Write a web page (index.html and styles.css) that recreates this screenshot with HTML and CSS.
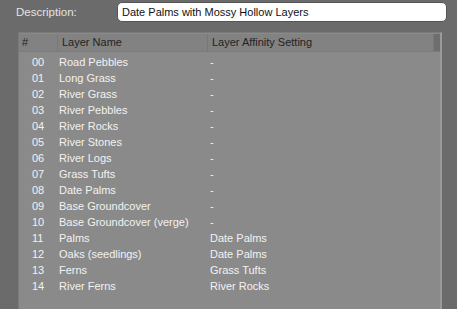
FILE: index.html
```html
<!DOCTYPE html>
<html lang="en">

<head>
    <meta charset="UTF-8">
    <title>Layer Set</title>
    <link rel="stylesheet" href="styles.css">
</head>

<body>
    <div class="desc-row">
        <label class="desc-label" for="desc">Description:</label>
        <div class="desc-box" id="desc">Date Palms with Mossy Hollow Layers</div>
    </div>

    <div class="panel">
        <div class="head">
            <div class="hcell hnum">#</div>
            <div class="hcell">Layer Name</div>
            <div class="hcell">Layer Affinity Setting</div>
            <div class="hscroll"></div>
        </div>
        <div class="rows" id="rows"></div>
    </div>

    <script>
        const layers = [
            ['00', 'Road Pebbles', '-'],
            ['01', 'Long Grass', '-'],
            ['02', 'River Grass', '-'],
            ['03', 'River Pebbles', '-'],
            ['04', 'River Rocks', '-'],
            ['05', 'River Stones', '-'],
            ['06', 'River Logs', '-'],
            ['07', 'Grass Tufts', '-'],
            ['08', 'Date Palms', '-'],
            ['09', 'Base Groundcover', '-'],
            ['10', 'Base Groundcover (verge)', '-'],
            ['11', 'Palms', 'Date Palms'],
            ['12', 'Oaks (seedlings)', 'Date Palms'],
            ['13', 'Ferns', 'Grass Tufts'],
            ['14', 'River Ferns', 'River Rocks']
        ];
        const rows = document.getElementById('rows');
        layers.forEach(function (l) {
            const row = document.createElement('div');
            row.className = 'row';
            row.innerHTML = '<span class="num">' + l[0] + '</span><span class="name">' + l[1] +
                '</span><span class="aff">' + l[2] + '</span>';
            rows.appendChild(row);
        });
    </script>
</body>

</html>
```

FILE: styles.css
```css
body {
    margin: 0;
    height: 309px;
    overflow: hidden;
    background-color: #6b6b6b;
    font-family: "Liberation Sans", Arial, sans-serif;
    font-size: 11px;
}

.desc-row {
    display: flex;
    align-items: center;
    height: 18px;
    padding: 3px 0 0 16px;
}

.desc-label {
    width: 101px;
    color: #e4e4e4;
    font-size: 11.5px;
}

.desc-box {
    width: 324px;
    height: 18px;
    line-height: 18px;
    padding-left: 4px;
    background-color: #fff;
    color: #111;
    border-radius: 5px;
    border: 1px solid #555;
    box-sizing: content-box;
}

.panel {
    margin: 11px 0 0 18px;
    width: 424px;
    height: 277px;
    box-sizing: border-box;
    background-color: #8a8a8a;
    border: 1px solid #7a7a7a;
    border-bottom: none;
    border-right: 2px solid #9a9a9a;
}

.head {
    display: grid;
    grid-template-columns: 39px 150px 1fr 6px;
    height: 17px;
    margin-top: 1px;
    background-color: #828282;
    border-bottom: 1px solid #7c7c7c;
}

.hcell {
    line-height: 17px;
    padding-left: 4px;
    color: #222;
    border-right: 1px solid #777;
    font-size: 11px;
}

.hnum {
    padding-left: 3px;
}

.hscroll {
    background-color: #6e6e6e;
}

.rows {
    padding-top: 2px;
}

.row {
    display: grid;
    grid-template-columns: 40px 151px 1fr;
    height: 16px;
    line-height: 16px;
    color: #f2f2f2;
}

.num {
    padding-left: 13px;
}
```
